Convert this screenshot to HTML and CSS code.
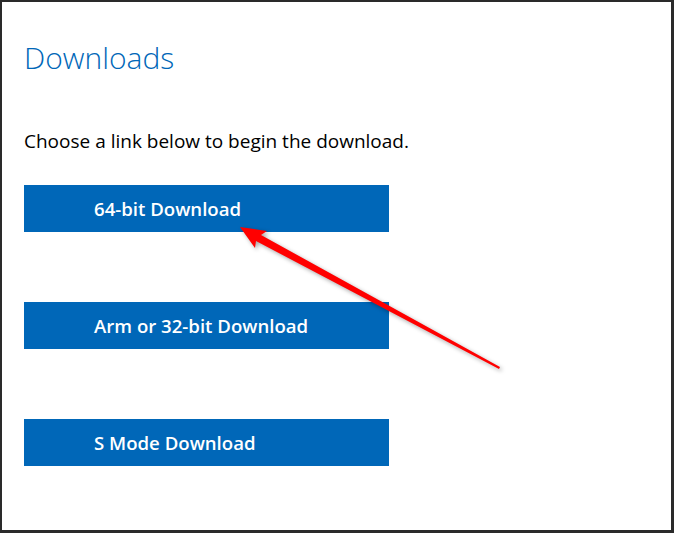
FILE: index.html
```html
<!DOCTYPE html>
<html>
<head>
<meta charset="utf-8">
<link rel="stylesheet" href="styles.css">
</head>
<body>
<div class="frame">
  <h1 class="title">Downloads</h1>
  <p class="lead">Choose a link below to begin the download.</p>
  <div class="buttons">
    <a class="btn">64-bit Download</a>
    <a class="btn">Arm or 32-bit Download</a>
    <a class="btn">S Mode Download</a>
  </div>
  <svg class="arrow" width="674" height="533" viewBox="0 0 674 533">
    <polygon points="240,227 267,231 261,235 500,367 499,369 256,241 255,248" fill="#ff0000"/>
  </svg>
</div>
</body>
</html>
```
FILE: styles.css
```css
html, body { margin: 0; padding: 0; background: #fff; }
.frame {
  position: relative;
  box-sizing: border-box;
  width: 674px;
  height: 533px;
  border: 2px solid #2a2a2a;
  border-right-width: 3px;
  border-bottom-width: 3px;
  padding: 0 0 0 22px;
  font-family: "Open Sans", "Noto Sans", sans-serif;
  overflow: hidden;
}
.title {
  margin: 34px 0 0 0;
  font-weight: 300;
  font-size: 30px;
  line-height: 44px;
  color: #0067b8;
}
.lead {
  margin: 49px 0 0 0;
  font-size: 19px;
  line-height: 24px;
  color: #000;
}
.buttons {
  display: flex;
  flex-direction: column;
  gap: 70px;
  margin-top: 32px;
}
.btn {
  display: flex;
  align-items: center;
  box-sizing: border-box;
  width: 365px;
  height: 47px;
  padding-left: 70px;
  background: #0067b8;
  color: #fff;
  font-weight: 600;
  font-size: 18.6px;
  text-decoration: none;
}
.arrow {
  position: absolute;
  left: -2px;
  top: -2px;
  filter: drop-shadow(2px 2px 2px rgba(0,0,0,0.35));
}
```
